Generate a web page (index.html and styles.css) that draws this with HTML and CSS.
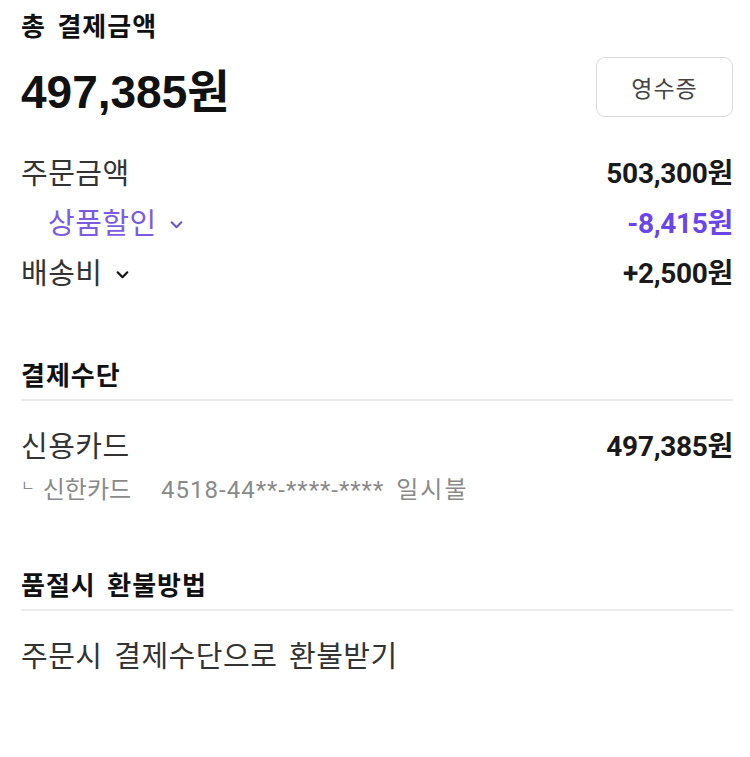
FILE: index.html
```html
<!DOCTYPE html>
<html lang="ko">
  <head>
    <meta charset="UTF-8" />
    <meta name="viewport" content="width=device-width, initial-scale=1.0" />
    <title>결제정보</title>
    <link rel="stylesheet" href="styles.css">
  </head>
  <body>
    <div class="container">
      <section class="total">
        <h2 class="section-title">총 결제금액</h2>
        <div class="total-row">
          <strong class="total-price">497,385원</strong>
          <button class="receipt-btn" type="button">영수증</button>
        </div>
      </section>

      <section class="breakdown">
        <div class="row">
          <span class="label">주문금액</span>
          <span class="amount">503,300원</span>
        </div>
        <div class="row sub discount">
          <span class="label">상품할인
            <svg class="chevron" viewBox="0 0 14 14" width="15" height="15"><path d="M2.5 5l4.5 4.5 4.5-4.5" fill="none" stroke="currentColor" stroke-width="2" stroke-linecap="round" stroke-linejoin="round"/></svg>
          </span>
          <span class="amount">-8,415원</span>
        </div>
        <div class="row">
          <span class="label">배송비
            <svg class="chevron dark" viewBox="0 0 14 14" width="15" height="15"><path d="M2.5 5l4.5 4.5 4.5-4.5" fill="none" stroke="currentColor" stroke-width="2" stroke-linecap="round" stroke-linejoin="round"/></svg>
          </span>
          <span class="amount">+2,500원</span>
        </div>
      </section>

      <section class="block">
        <h2 class="section-title bordered">결제수단</h2>
        <div class="row">
          <span class="label">신용카드</span>
          <span class="amount">497,385원</span>
        </div>
        <p class="card-info"><span class="corner">ㄴ</span> 신한카드<span class="card-num">4518-44**-****-****</span><span class="installment">일시불</span></p>
      </section>

      <section class="block refund-block">
        <h2 class="section-title bordered">품절시 환불방법</h2>
        <p class="refund">주문시 결제수단으로 환불받기</p>
      </section>
    </div>
  </body>
</html>
```

FILE: styles.css
```css
* {
  margin: 0;
  padding: 0;
  box-sizing: border-box;
}

body {
  font-family: Roboto, "Noto Sans CJK KR", sans-serif;
  background-color: #fff;
  color: #222;
}

.container {
  padding: 0 17px 0 21px;
}

.section-title {
  font-size: 26px;
  font-weight: 700;
  color: #111;
  line-height: 32px;
  letter-spacing: 1px;
  word-spacing: 4px;
}

.total {
  padding-top: 11px;
}

.total-row {
  display: flex;
  justify-content: space-between;
  align-items: center;
  margin-top: 14px;
}

.total-price {
  font-family: "Liberation Sans", "Noto Sans CJK KR", sans-serif;
  font-size: 46px;
  font-weight: 700;
  color: #111;
  line-height: 50px;
  padding-top: 10px;
}

.receipt-btn {
  width: 137px;
  height: 60px;
  border: 1px solid #d9d9d9;
  border-radius: 9px;
  background: #fff;
  font-family: "Noto Sans CJK KR", sans-serif;
  font-size: 23px;
  letter-spacing: 1px;
  color: #444;
}

.breakdown {
  margin-top: 37px;
  display: flex;
  flex-direction: column;
  gap: 10px;
}

.row {
  display: flex;
  justify-content: space-between;
  align-items: center;
  line-height: 40px;
}

.label {
  font-size: 29px;
  letter-spacing: 0.5px;
  color: #333;
  display: flex;
  align-items: center;
  gap: 12px;
}

.amount {
  font-size: 28px;
  font-weight: 700;
  color: #1a1a1a;
  letter-spacing: -0.3px;
}

.sub .label {
  padding-left: 27px;
}

.discount .label {
  color: #7b5ce0;
}

.discount .amount {
  color: #6a45ea;
}

.chevron {
  color: #6b55d6;
}

.chevron.dark {
  color: #111;
}

.block {
  margin-top: 66px;
}

.refund-block {
  margin-top: 63px;
}

.section-title.bordered {
  padding-bottom: 7px;
  border-bottom: 2px solid #ebebeb;
  margin-bottom: 26px;
}

.card-info {
  font-size: 24px;
  color: #8a8a8a;
  margin-top: 2px;
  line-height: 34px;
}

.corner {
  font-size: 15px;
  vertical-align: 7px;
  margin-right: 2px;
}

.card-num {
  margin: 0 12px 0 30px;
  letter-spacing: 1px;
}

.installment {
  letter-spacing: 2px;
}

.refund {
  font-size: 29px;
  letter-spacing: 0.5px;
  word-spacing: 4px;
  color: #333;
  line-height: 40px;
}
```
